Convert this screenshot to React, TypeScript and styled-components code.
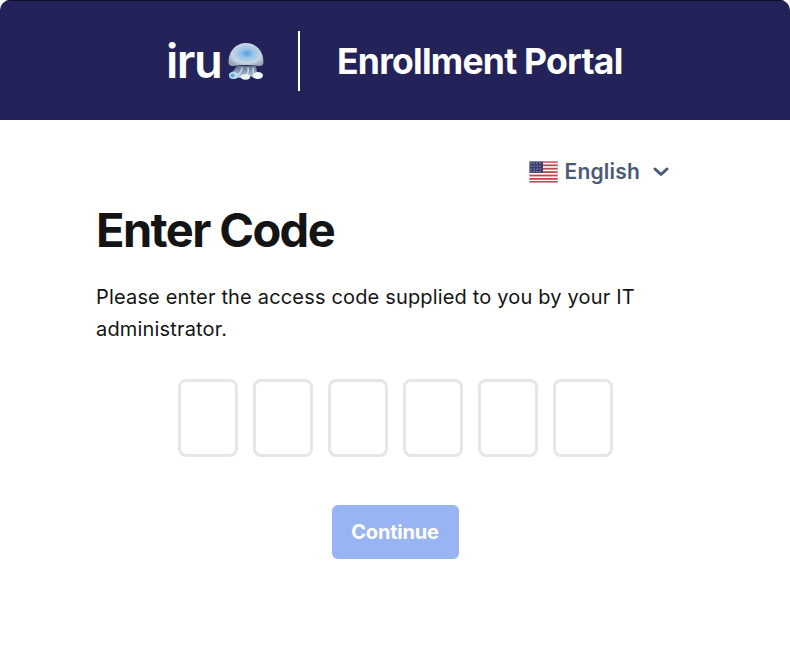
import React from "react";
import styled, { createGlobalStyle } from "styled-components";

const Global = createGlobalStyle`
  html, body { margin: 0; padding: 0; background: #fff; }
  body { font-family: Inter, "Liberation Sans", sans-serif; }
`;
const Page = styled.div`
  width: 790px;
  height: 655px;
  background: #fff;
  border-radius: 10px;
  overflow: hidden;
  display: flex;
  flex-direction: column;
`;
const Header = styled.header`
  height: 120px;
  background: #23235a;
  display: flex;
  align-items: center;
  justify-content: flex-start;
  padding-left: 166px;
  box-sizing: border-box;
  flex: none;
  border-top: 1px solid #0e0e2c;
`;
const Logo = styled.div`
  display: flex;
  align-items: center;
  width: 132px;
  flex: none;
`;
const LogoWord = styled.span`
  color: #fff;
  font-size: 47px;
  line-height: 46px;
  font-weight: 600;
  letter-spacing: -1.5px;
`;
const Divider = styled.div`
  width: 2px;
  height: 60px;
  background: #fff;
  flex: none;
  margin-right: 37px;
`;
const PortalTitle = styled.h1`
  margin: 2px 0 0;
  color: #fff;
  font-size: 35.5px;
  line-height: 40px;
  font-weight: 700;
  letter-spacing: -0.75px;
  white-space: nowrap;
`;
const Content = styled.main`
  flex: 1;
  display: flex;
  flex-direction: column;
  padding: 0 96px;
`;
const LangRow = styled.div`
  display: flex;
  justify-content: flex-end;
  align-items: center;
  gap: 7px;
  height: 24px;
  margin-top: 40px;
  padding-right: 25px;
`;
const LangLabel = styled.span`
  color: #4a5a75;
  font-size: 21px;
  line-height: 24px;
  font-weight: 600;
  letter-spacing: 0.2px;
`;
const Heading = styled.h2`
  margin: 18px 0 0;
  font-size: 47px;
  line-height: 56px;
  font-weight: 700;
  color: #141414;
  letter-spacing: -1.6px;
`;
const Lead = styled.p`
  margin: 23px 0 0;
  width: 580px;
  font-size: 20px;
  line-height: 32px;
  color: #141414;
  letter-spacing: 0.17px;
`;
const CodeRow = styled.div`
  display: flex;
  justify-content: center;
  gap: 15px;
  margin-top: 34px;
`;
const CodeBox = styled.input`
  width: 60px;
  height: 78px;
  box-sizing: border-box;
  border: 3px solid #e6e6e6;
  border-radius: 8px;
  background: #fff;
  padding: 0;
  outline: none;
`;
const ButtonRow = styled.div`
  display: flex;
  justify-content: center;
  margin-top: 48px;
`;
const ContinueButton = styled.button`
  width: 127px;
  height: 54px;
  border: none;
  border-radius: 6px;
  background: #99b4f2;
  color: #fff;
  font-family: inherit;
  font-size: 20px;
  font-weight: 700;
  letter-spacing: -0.2px;
  padding: 0;
`;

const Jelly = () => (
  <svg width="36" height="38" viewBox="0 0 36 38" style={{ marginLeft: 7, filter: "blur(0.5px)" }} aria-hidden="true">
    <defs>
      <radialGradient id="bell" cx="52%" cy="45%" r="60%">
        <stop offset="0%" stopColor="#4a9ee6" />
        <stop offset="30%" stopColor="#95c2e8" />
        <stop offset="70%" stopColor="#c6d6e4" />
        <stop offset="100%" stopColor="#98a5b5" />
      </radialGradient>
      <linearGradient id="body" x1="0" y1="0" x2="0" y2="1">
        <stop offset="0%" stopColor="#5f7189" />
        <stop offset="55%" stopColor="#8ea6c0" />
        <stop offset="100%" stopColor="#e6eef6" />
      </linearGradient>
    </defs>
    <path d="M9 24h19c1 3 0 6 2 7l3 1-2 4c-3 1-6 0-8-2-2 2-6 3-9 2-2 0-3-1-5 0-3 1-8 0-8-3s4-3 5-5c1-1 2-3 3-4z" fill="url(#body)" />
    <path d="M14 26c0 4-3 6-6 8M20 26c1 4-1 7-4 9M25 26c0 3 0 5 1 7" stroke="#dfe9f3" strokeWidth="1.500" fill="none" strokeLinecap="round" opacity="0.8" />
    <path d="M0.5 20C0.5 9 8 1 18 1s17.500 8 17.500 19c0 3-2 4.500-5 4-8-1.500-17-1.500-25 0-3 .5-5-1-5-4z" fill="url(#bell)" />
    <ellipse cx="5.500" cy="33.500" rx="4.500" ry="3.500" fill="#b7d8f0" />
    <ellipse cx="4.500" cy="33.500" rx="2" ry="1.800" fill="#5aa5e0" />
    <ellipse cx="17.500" cy="35" rx="4.500" ry="2.800" fill="#eef3f8" />
    <ellipse cx="30" cy="33.500" rx="5" ry="3.500" fill="#f2f5f9" />
  </svg>
);

const Flag = () => (
  <svg width="29" height="22" viewBox="0 0 29 22" aria-hidden="true">
    <rect width="29" height="22" fill="#fff" />
    {[0, 3.4, 6.8, 10.2, 13.6, 17, 20].map((y) => (
      <rect key={y} y={y} width="29" height="1.8" fill="#c0474f" />
    ))}
    <rect width="14" height="11.8" fill="#3b3f6e" />
    {[2, 5, 8, 10.5].map((y) =>
      [2, 5, 8, 11].map((x) => <circle key={`${x}-${y}`} cx={x} cy={y} r="0.6" fill="#c9cbe0" />)
    )}
    <rect x="0.25" y="0.25" width="28.5" height="21.5" fill="none" stroke="#cfd3dc" strokeWidth="0.5" />
  </svg>
);

const Chevron = () => (
  <svg width="16" height="10" viewBox="0 0 16 10" style={{ marginLeft: 6 }} aria-hidden="true">
    <path d="M2 2l6 5.5L14 2" fill="none" stroke="#4a5a75" strokeWidth="3" strokeLinecap="round" strokeLinejoin="round" />
  </svg>
);

export default function App() {
  return (
    <>
      <Global />
      <Page>
        <Header>
          <Logo>
            <LogoWord>iru</LogoWord>
            <Jelly />
          </Logo>
          <Divider />
          <PortalTitle>Enrollment Portal</PortalTitle>
        </Header>
        <Content>
          <LangRow>
            <Flag />
            <LangLabel>English</LangLabel>
            <Chevron />
          </LangRow>
          <Heading>Enter Code</Heading>
          <Lead>Please enter the access code supplied to you by your IT administrator.</Lead>
          <CodeRow>
            {[0, 1, 2, 3, 4, 5].map((i) => (
              <CodeBox key={i} maxLength={1} aria-label={`Digit ${i + 1}`} />
            ))}
          </CodeRow>
          <ButtonRow>
            <ContinueButton disabled>Continue</ContinueButton>
          </ButtonRow>
        </Content>
      </Page>
    </>
  );
}
